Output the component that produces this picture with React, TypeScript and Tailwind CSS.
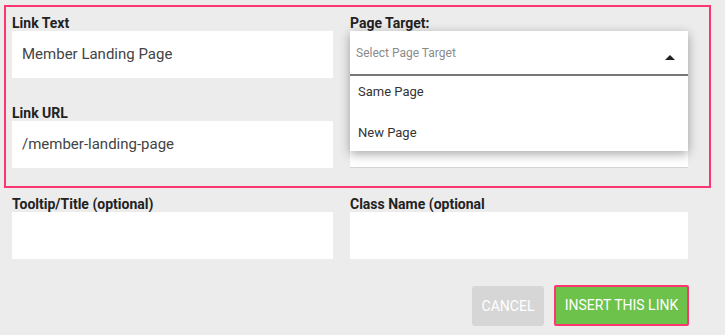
import React from "react";

const font = { fontFamily: "Roboto, 'Liberation Sans', sans-serif" };

function Label({ children }: { children: React.ReactNode }) {
  return (
    <div className="h-[16px] text-[14px] leading-[16px] font-bold text-[#222]">{children}</div>
  );
}

function Input({ value }: { value?: string }) {
  return (
    <div className="h-[47px] bg-white flex items-center pl-[10px] text-[15px] text-[#444]">
      {value}
    </div>
  );
}

export default function App() {
  return (
    <div className="w-[725px] h-[335px] bg-[#ececec] overflow-hidden" style={font}>
      <div className="ml-[4px] mt-[5px] w-[707px] h-[183px] border-2 border-[#fd3570] pl-[6px] pt-[8px]">
        <div className="grid grid-cols-[321px_338px] gap-x-[17px]">
          <div className="flex flex-col">
            <Label>Link Text</Label>
            <Input value="Member Landing Page" />
            <div className="mt-[27px]">
              <Label>Link URL</Label>
            </div>
            <Input value="/member-landing-page" />
          </div>
          <div className="flex flex-col">
            <Label>Page Target:</Label>
            <div className="relative h-[137px] bg-white border-b border-[#d4d4d4]">
              <div className="absolute left-0 top-0 w-full bg-white shadow-[0_3px_10px_rgba(0,0,0,0.35)] z-10">
                <div className="h-[43px] flex items-start justify-between pt-[14px] pl-[6px] pr-[13px]">
                  <span className="text-[12px] leading-[16px] text-[#8a8a8a]">Select Page Target</span>
                  <svg width="10" height="6" viewBox="0 0 10 6" className="mt-[10px]">
                    <polygon points="5,0 10,5 0,5" fill="#222" />
                  </svg>
                </div>
                <div className="h-[2px] bg-[#777]" />
                <div className="flex flex-col gap-[21px] pt-[6px] pb-[8px] pl-[8px] text-[13px] leading-[20px] text-[#333]">
                  <div>Same Page</div>
                  <div>New Page</div>
                </div>
              </div>
            </div>
          </div>
        </div>
      </div>
      <div className="pl-[12px] pt-[8px]">
        <div className="grid grid-cols-[321px_338px] gap-x-[17px]">
          <div className="flex flex-col">
            <Label>Tooltip/Title (optional)</Label>
            <Input />
          </div>
          <div className="flex flex-col">
            <Label>Class Name (optional</Label>
            <Input />
          </div>
        </div>
        <div className="flex justify-end gap-[10px] mt-[26px] w-[677px]">
          <div className="mt-[1px] w-[72px] h-[40px] bg-[#d6d6d6] rounded-[3px] flex items-center justify-center text-white text-[14px]">
            CANCEL
          </div>
          <div className="w-[135px] h-[41px] border-2 border-[#fd3570] bg-[#6cc24a] rounded-[2px] flex items-center justify-center text-white text-[14px]">
            INSERT THIS LINK
          </div>
        </div>
      </div>
    </div>
  );
}
